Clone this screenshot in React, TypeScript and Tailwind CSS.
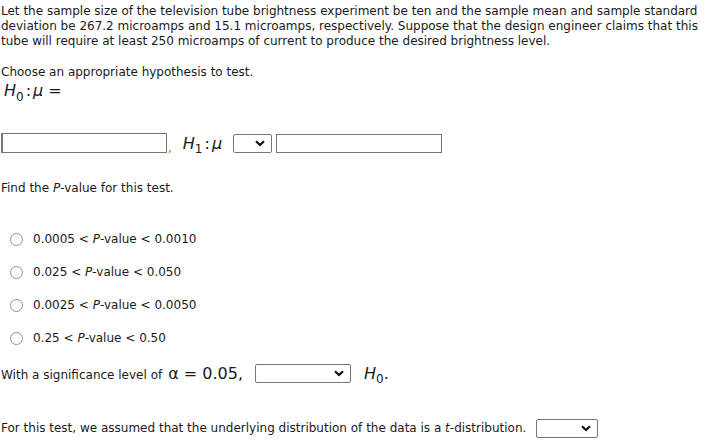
import React from "react";

function Chevron() {
  return (
    <svg width="10" height="7" viewBox="0 0 10 7" className="shrink-0">
      <path d="M1 1.2 L5 5 L9 1.2" fill="none" stroke="#111" strokeWidth="2.2" />
    </svg>
  );
}

function Select({ w }: { w: string }) {
  return (
    <div className={`${w} h-[19px] border border-[#767676] rounded-[2px] bg-white flex items-center justify-end pr-[6px]`}>
      <Chevron />
    </div>
  );
}

function Radio({ lo, hi }: { lo: string; hi: string }) {
  return (
    <div className="flex items-center h-[33px]">
      <div className="w-[13px] h-[13px] rounded-full border border-[#8f8f8f] bg-white ml-[9px] mr-[10px]" />
      <span>
        {lo} &lt; <i>P</i>-value &lt; {hi}
      </span>
    </div>
  );
}

export default function App() {
  return (
    <div className="w-[712px] h-[442px] bg-white text-[#1a1a1a] text-[12px] leading-[15px] font-['DejaVu_Sans',sans-serif] overflow-hidden pt-[4px] pl-[1px]">
      <p>
        Let the sample size of the television tube brightness experiment be ten and the sample mean and sample standard
        deviation be 267.2 microamps and 15.1 microamps, respectively. Suppose that the design engineer claims that this
        tube will require at least 250 microamps of current to produce the desired brightness level.
      </p>

      <p className="mt-[16px]">Choose an appropriate hypothesis to test.</p>
      <div className="text-[16px] leading-[20px] ml-[3px] mt-[1px]">
        <i>H</i>
        <sub className="text-[12px] bottom-[-0.4em]">0</sub>
        <span className="mx-[2px]">:</span>
        <i>μ</i> =
      </div>

      <div className="flex items-center mt-[32px]">
        <div className="w-[166px] h-[20px] border border-[#767676] border-l-2 bg-white" />
        <span className="ml-[1px] self-end text-[#b07a00] leading-[10px]">,</span>
        <span className="text-[16px] ml-[11px] mr-[11px]">
          <i>H</i>
          <sub className="text-[12px] bottom-[-0.4em]">1</sub>
          <span className="mx-[2px]">:</span>
          <i>μ</i>
        </span>
        <Select w="w-[39px]" />
        <div className="w-[166px] h-[19px] border border-[#767676] bg-white ml-[4px]" />
      </div>

      <p className="mt-[28px]">
        Find the <i>P</i>-value for this test.
      </p>

      <div className="mt-[27px]">
        <Radio lo="0.0005" hi="0.0010" />
        <Radio lo="0.025" hi="0.050" />
        <Radio lo="0.0025" hi="0.0050" />
        <Radio lo="0.25" hi="0.50" />
      </div>

      <div className="flex items-center mt-[8px]">
        <span className="mt-[5px]">With a significance level of</span>
        <span className="text-[16px] ml-[6px] mr-[12px]">α = 0.05,</span>
        <Select w="w-[96px]" />
        <span className="text-[16px] ml-[13px]">
          <i>H</i>
          <sub className="text-[12px] bottom-[-0.4em]">0</sub>.
        </span>
      </div>

      <div className="flex items-center mt-[36px]">
        <span>
          For this test, we assumed that the underlying distribution of the data is a <i>t</i>-distribution.
        </span>
        <div className="ml-[10px]">
          <Select w="w-[62px]" />
        </div>
      </div>
    </div>
  );
}
